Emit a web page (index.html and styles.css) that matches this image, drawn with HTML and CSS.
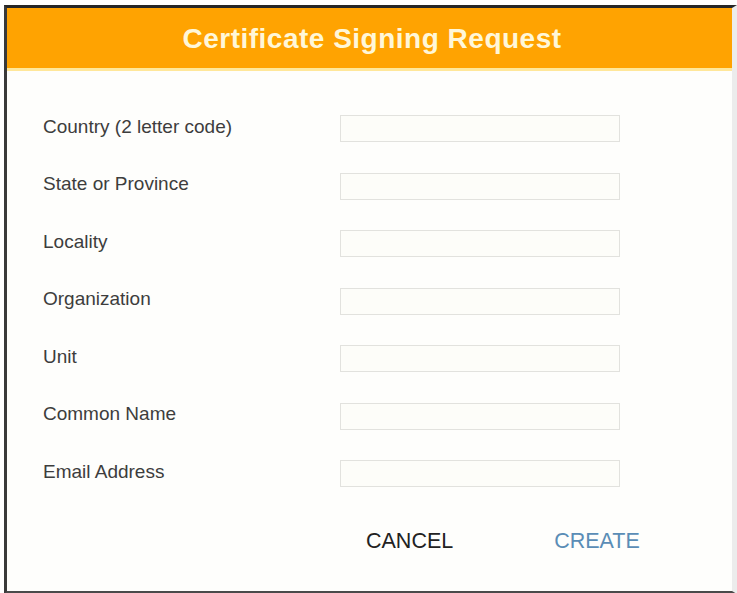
FILE: index.html
```html
<!DOCTYPE html>
<html>
<head>
<meta charset="utf-8">
<link rel="stylesheet" href="styles.css">
</head>
<body>
<div class="dialog">
  <div class="header"><h1 class="title">Certificate Signing Request</h1></div>
  <div class="form">
    <label class="label">Country (2 letter code)</label><div class="input"></div>
    <label class="label">State or Province</label><div class="input"></div>
    <label class="label">Locality</label><div class="input"></div>
    <label class="label">Organization</label><div class="input"></div>
    <label class="label">Unit</label><div class="input"></div>
    <label class="label">Common Name</label><div class="input"></div>
    <label class="label">Email Address</label><div class="input"></div>
  </div>
  <div class="actions">
    <span class="btn cancel">CANCEL</span>
    <span class="btn create">CREATE</span>
  </div>
</div>
</body>
</html>
```
FILE: styles.css
```css
html, body { margin: 0; padding: 0; background: #ffffff; }
body { font-family: "Liberation Sans", Arial, sans-serif; }
.dialog {
  margin: 5px 0 0 4px;
  width: 725px;
  height: 583px;
  border-top: 3px solid #262626;
  border-left: 3px solid #3a3a3a;
  border-bottom: 3px solid #4a4a4a;
  border-right: 5px solid #ececec;
  background: #fefefc;
  display: flex;
  flex-direction: column;
}
.header {
  height: 60px;
  background: #ffa301;
  border-bottom: 3px solid #ffe79a;
  display: flex;
  align-items: center;
  justify-content: center;
}
.title {
  margin: 2px 0 0 5px;
  font-size: 28px;
  font-weight: bold;
  letter-spacing: 0.5px;
  color: #fff7d8;
}
.form {
  display: grid;
  grid-template-columns: 297px 280px;
  row-gap: 30.5px;
  padding: 44px 0 0 36px;
  align-items: center;
}
.label {
  font-size: 19px;
  color: #3d3d3d;
  line-height: 22px;
  margin-top: -4px;
}
.input {
  height: 25px;
  border: 1px solid #e2e2de;
  background: #fdfdf9;
}
.actions {
  display: flex;
  padding: 42px 0 0 359px;
  gap: 101px;
}
.btn { font-size: 21.5px; line-height: 24px; }
.cancel { color: #222222; }
.create { color: #5a8db6; }
```
